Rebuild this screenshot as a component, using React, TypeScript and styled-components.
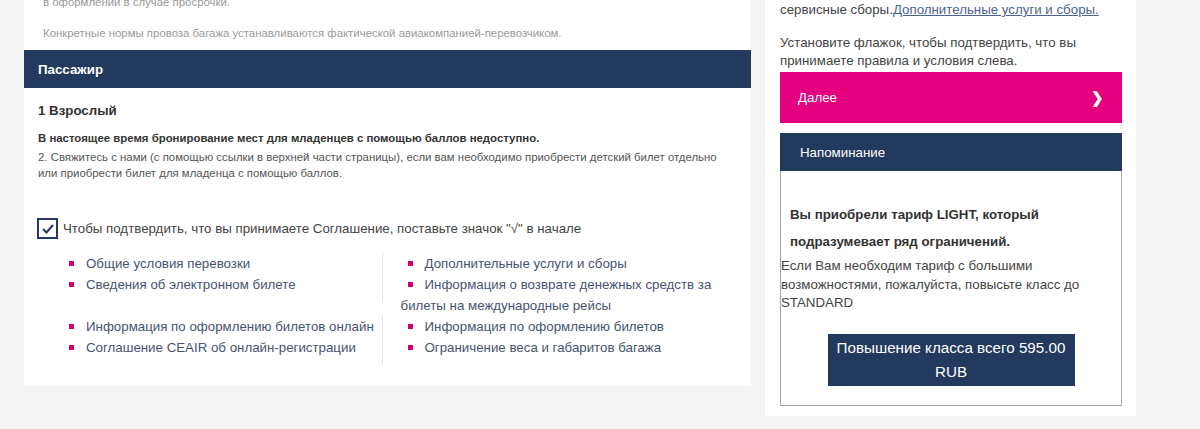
import React from "react";
import styled, { createGlobalStyle } from "styled-components";

const colors = {
  navy: "#223a5e",
  magenta: "#e4007f",
  page: "#f4f4f4",
  text: "#333333",
  muted: "#9a9a9a",
  link: "#475471",
  bullet: "#d1006e",
  divider: "#e2e2e2",
};

const GlobalStyle = createGlobalStyle`
  body {
    margin: 0;
    background: ${colors.page};
    font-family: "Liberation Sans", Arial, sans-serif;
    color: ${colors.text};
  }
`;

const Page = styled.div`
  display: flex;
  align-items: flex-start;
  gap: 14px;
  padding-left: 24px;
  height: 429px;
  overflow: hidden;
`;

/* ---------- left: passenger / agreement card ---------- */

const MainCard = styled.section`
  width: 727px;
  background: #fff;
  padding-bottom: 22px;
`;

const Notes = styled.div`
  padding: 0 19px 9px;
  margin-top: -6px;
`;

const Note = styled.p`
  margin: 0;
  font-size: 11.4px;
  line-height: 16px;
  color: ${colors.muted};
  & + & {
    margin-top: 15px;
  }
`;

const SectionHeader = styled.div`
  display: flex;
  align-items: center;
  height: 38px;
  padding: 0 14px;
  background: ${colors.navy};
  color: #fff;
  font-size: 13.3px;
  font-weight: bold;
`;

const Body = styled.div`
  padding: 13px 14px 0;
`;

const PassengerTitle = styled.div`
  font-size: 13.3px;
  font-weight: bold;
  line-height: 20px;
`;

const InfoText = styled.p<{ $bold?: boolean }>`
  margin: ${(p) => (p.$bold ? "9px 0 3px" : "0")};
  font-size: 11.4px;
  line-height: 16px;
  font-weight: ${(p) => (p.$bold ? "bold" : "normal")};
  color: ${(p) => (p.$bold ? colors.text : "#555")};
`;

const AgreeRow = styled.label`
  display: flex;
  align-items: center;
  gap: 5px;
  margin-top: 37px;
  font-size: 13.3px;
  line-height: 20px;
  color: #444;
`;

const CheckBox = styled.span`
  display: flex;
  align-items: center;
  justify-content: center;
  width: 21px;
  height: 21px;
  box-sizing: border-box;
  border: 2px solid ${colors.navy};
  background: #fff;
  margin-left: -1px;
`;

const LinkGroup = styled.div`
  display: flex;
  align-items: flex-start;
  margin-top: 14px;
  & + & {
    margin-top: 0;
  }
`;

// the left column carries the thin divider between the two link columns
const LinkList = styled.ul<{ $side: "left" | "right" }>`
  list-style: none;
  margin: 0;
  padding: ${(p) => (p.$side === "left" ? "0 0 6px 24px" : "0 0 0 18px")};
  width: ${(p) => (p.$side === "left" ? "320px" : "337px")};
  border-right: ${(p) => (p.$side === "left" ? `1px solid ${colors.divider}` : "none")};
`;

const LinkItem = styled.li`
  font-size: 13.3px;
  line-height: 21px;
  color: ${colors.link};
`;

const Bullet = styled.span`
  display: inline-block;
  width: 5px;
  height: 5px;
  margin: 0 12px 1px 7px;
  vertical-align: middle;
  background: ${colors.bullet};
`;

/* ---------- right: summary sidebar ---------- */

const Sidebar = styled.aside`
  width: 371px;
  box-sizing: border-box;
  background: #fff;
  padding: 1px 14px 10px 15px;
`;

const SideText = styled.p`
  margin: 0;
  font-size: 13.3px;
  line-height: 18px;
  color: #444;
  & + & {
    margin-top: 15px;
  }
`;

const InlineLink = styled.a`
  color: #4a6592;
  text-decoration: underline;
`;

const NextButton = styled.button`
  display: flex;
  align-items: center;
  justify-content: space-between;
  width: 100%;
  height: 51px;
  margin-top: 2px;
  padding: 0 18px;
  border: none;
  background: ${colors.magenta};
  color: #fff;
  font-family: inherit;
  font-size: 13.3px;
  cursor: pointer;
`;

const Chevron = styled.span`
  font-weight: bold;
  font-size: 15px;
`;

const ReminderHeader = styled.div`
  display: flex;
  align-items: center;
  height: 38px;
  margin-top: 10px;
  padding: 0 20px;
  background: ${colors.navy};
  color: #fff;
  font-size: 13.3px;
`;

const ReminderBox = styled.div`
  border: 1px solid #a8a8a8;
  border-top: none;
  padding: 30px 0 19px;
`;

const ReminderLead = styled.p`
  margin: 0;
  padding-left: 9px;
  font-size: 13.3px;
  font-weight: bold;
  line-height: 27px;
  color: #333;
`;

const ReminderText = styled.p`
  margin: 2px 0 0;
  font-size: 13.3px;
  line-height: 18.5px;
  color: #444;
`;

const UpgradeButton = styled.button`
  display: block;
  width: 247px;
  margin: 21px auto 0;
  padding: 2px 6px;
  border: none;
  background: ${colors.navy};
  color: #fff;
  font-family: inherit;
  font-size: 15.2px;
  line-height: 24px;
  cursor: pointer;
`;

const linkGroups: [string[], string[]][] = [
  [
    ["Общие условия перевозки", "Сведения об электронном билете"],
    [
      "Дополнительные услуги и сборы",
      "Информация о возврате денежных средств за билеты на международные рейсы",
    ],
  ],
  [
    ["Информация по оформлению билетов онлайн", "Соглашение CEAIR об онлайн-регистрации"],
    ["Информация по оформлению билетов", "Ограничение веса и габаритов багажа"],
  ],
];

const App = () => (
  <>
    <GlobalStyle />
    <Page>
      <MainCard>
        <Notes>
          <Note>в оформлении в случае просрочки.</Note>
          <Note>
            Конкретные нормы провоза багажа устанавливаются фактической
            авиакомпанией-перевозчиком.
          </Note>
        </Notes>
        <SectionHeader>Пассажир</SectionHeader>
        <Body>
          <PassengerTitle>1 Взрослый</PassengerTitle>
          <InfoText $bold>
            В настоящее время бронирование мест для младенцев с помощью баллов
            недоступно.
          </InfoText>
          <InfoText>
            2. Свяжитесь с нами (с помощью ссылки в верхней части страницы), если
            вам необходимо приобрести детский билет отдельно или приобрести
            билет для младенца с помощью баллов.
          </InfoText>
          <AgreeRow>
            <CheckBox>
              <svg width="14" height="12" viewBox="0 0 14 12">
                <polyline
                  points="2,6 5.5,9.5 12,2"
                  fill="none"
                  stroke={colors.navy}
                  strokeWidth="2"
                />
              </svg>
            </CheckBox>
            Чтобы подтвердить, что вы принимаете Соглашение, поставьте значок
            "√" в начале
          </AgreeRow>
          {linkGroups.map(([left, right], i) => (
            <LinkGroup key={i}>
              <LinkList $side="left">
                {left.map((t) => (
                  <LinkItem key={t}>
                    <Bullet />
                    {t}
                  </LinkItem>
                ))}
              </LinkList>
              <LinkList $side="right">
                {right.map((t) => (
                  <LinkItem key={t}>
                    <Bullet />
                    {t}
                  </LinkItem>
                ))}
              </LinkList>
            </LinkGroup>
          ))}
        </Body>
      </MainCard>

      <Sidebar>
        <SideText>
          сервисные сборы.
          <InlineLink href="#">Дополнительные услуги и сборы.</InlineLink>
        </SideText>
        <SideText>
          Установите флажок, чтобы подтвердить, что вы принимаете правила и
          условия слева.
        </SideText>
        <NextButton>
          <span>Далее</span>
          <Chevron>❯</Chevron>
        </NextButton>
        <ReminderHeader>Напоминание</ReminderHeader>
        <ReminderBox>
          <ReminderLead>
            Вы приобрели тариф LIGHT, который
            <br />
            подразумевает ряд ограничений.
          </ReminderLead>
          <ReminderText>
            Если Вам необходим тариф с большими возможностями, пожалуйста,
            повысьте класс до STANDARD
          </ReminderText>
          <UpgradeButton>Повышение класса всего 595.00 RUB</UpgradeButton>
        </ReminderBox>
      </Sidebar>
    </Page>
  </>
);

export default App;
